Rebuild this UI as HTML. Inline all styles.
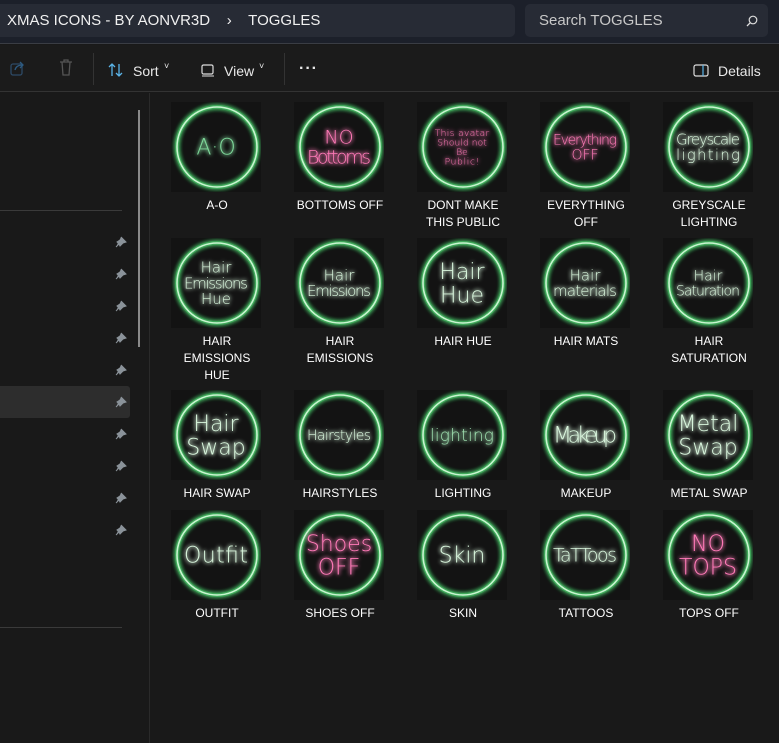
<!DOCTYPE html>
<html><head><meta charset="utf-8"><style>
*{margin:0;padding:0;box-sizing:border-box}
body{width:779px;height:743px;background:#191919;font-family:"Liberation Sans",sans-serif;color:#fff;position:relative;overflow:hidden}
.top{position:absolute;left:0;top:0;width:779px;height:44px;background:#1c202a;border-bottom:1px solid #3a3d44}
.addr{position:absolute;left:-6px;top:4px;width:521px;height:33px;background:#272b35;border-radius:5px;font-size:15px;line-height:33px;padding-left:13px;color:#f0f0f0}
.search{position:absolute;left:525px;top:4px;width:243px;height:33px;background:#272b35;border-radius:5px;font-size:15px;line-height:33px;padding-left:14px;color:#c8c8c8}
.tb{position:absolute;left:0;top:45px;width:779px;height:47px;background:#1b1b1b;border-bottom:1px solid #333;font-size:14px;color:#e8e8e8}
.tb span{position:absolute;top:18px}
.sep{position:absolute;top:8px;width:1px;height:32px;background:#333}
.lab{position:absolute;width:120px;text-align:center;font-size:12px;line-height:17px;color:#fff}
.ic{position:absolute;width:90px;height:90px;background:#131313}
</style></head><body>
<div class="top">
<div class="addr">XMAS ICONS - BY AONVR3D &nbsp;&nbsp;&nbsp;›&nbsp;&nbsp;&nbsp; TOGGLES</div>
<div class="search">Search TOGGLES<svg style="position:absolute;right:10px;top:11px" width="12" height="12"><circle cx="7" cy="5" r="3.8" fill="none" stroke="#ddd" stroke-width="1.2"/><path d="M4.3 7.7L1 11" stroke="#ddd" stroke-width="1.3"/></svg></div>
</div>
<div class="tb">
<svg style="position:absolute;left:10px;top:15px" width="16" height="16"><rect x="1" y="4" width="11" height="11" rx="2" fill="none" stroke="#2d4a66" stroke-width="1.3"/><path d="M5 10 Q6 5 13 5 M10 2 L13 5 L10 8" fill="none" stroke="#2d5a80" stroke-width="1.3"/></svg>
<svg style="position:absolute;left:59px;top:14px" width="14" height="18"><path d="M1 3H13M5 3V1H9V3M3 3L4 16H10L11 3" fill="none" stroke="#555" stroke-width="1.3"/></svg>
<div class="sep" style="left:93px"></div>
<svg style="position:absolute;left:108px;top:17px" width="16" height="16"><path d="M4 14V2M1 5L4 2L7 5M11 2V14M8 11L11 14L14 11" fill="none" stroke="#5ab4e8" stroke-width="1.3"/></svg>
<span style="left:133px">Sort</span><span style="left:164px;font-size:9px;top:16px">˅</span>
<svg style="position:absolute;left:201px;top:19px" width="14" height="13"><rect x="1" y="1" width="11" height="9" rx="1.5" fill="none" stroke="#ddd" stroke-width="1.2"/><path d="M1 12H13" stroke="#ddd"/></svg>
<span style="left:224px">View</span><span style="left:259px;font-size:9px;top:16px">˅</span>
<div class="sep" style="left:284px"></div>
<span style="left:299px;top:15px;font-weight:bold;font-size:16px;letter-spacing:1px">···</span>
<svg style="position:absolute;left:693px;top:19px" width="16" height="13"><rect x="1" y="1" width="14" height="11" rx="2" fill="none" stroke="#ddd" stroke-width="1.2"/><path d="M10 1V12" stroke="#5ab4e8" stroke-width="1.2"/></svg>
<span style="left:718px">Details</span>
</div>
<div style="position:absolute;left:0;top:210px;width:122px;height:1px;background:#3a3a3a"></div>
<div style="position:absolute;left:0;top:627px;width:122px;height:1px;background:#3a3a3a"></div>
<div style="position:absolute;left:0;top:386px;width:130px;height:32px;background:#2d2d2d;border-radius:0 3px 3px 0"></div>
<div style="position:absolute;left:138px;top:110px;width:2px;height:237px;background:#8a8a8a"></div>
<div style="position:absolute;left:149px;top:93px;width:1px;height:650px;background:#2a2a2a"></div>
<svg width="0" height="0" style="position:absolute"><defs><filter id="g" x="-30%" y="-30%" width="160%" height="160%"><feGaussianBlur stdDeviation="2.2" result="b"/><feMerge><feMergeNode in="b"/><feMergeNode in="b"/><feMergeNode in="SourceGraphic"/></feMerge></filter></defs></svg>
<div id="pins"></div>
<div id="grid"></div>
<script>
var p='';[242,274,306,338,370,402,434,466,498,530].forEach(function(y){p+='<svg style="position:absolute;left:115px;top:'+(y-6)+'px" width="12" height="12"><path d="M6 1L11 6L8 7L5 10L4 8L1 11M4 8L2 6L5 4Z" fill="#8a9299" stroke="#8a9299" stroke-width="1"/></svg>'});
document.getElementById('pins').innerHTML=p;
var items=[["A-O",["A·O"],"#7fd89a"],["BOTTOMS OFF",["NO","Bottoms"],"#ff7ab8"],["DONT MAKE<br>THIS PUBLIC",["This avatar","Should not","Be","Public!"],"#ff7ab8"],["EVERYTHING<br>OFF",["Everything","OFF"],"#ff7ab8"],["GREYSCALE<br>LIGHTING",["Greyscale","lighting"],"#d8f5dc"],
["HAIR<br>EMISSIONS<br>HUE",["Hair","Emissions","Hue"],"#d8f5dc"],["HAIR<br>EMISSIONS",["Hair","Emissions"],"#d8f5dc"],["HAIR HUE",["Hair","Hue"],"#d8f5dc"],["HAIR MATS",["Hair","materials"],"#d8f5dc"],["HAIR<br>SATURATION",["Hair","Saturation"],"#d8f5dc"],
["HAIR SWAP",["Hair","Swap"],"#d8f5dc"],["HAIRSTYLES",["Hairstyles"],"#d8f5dc"],["LIGHTING",["lighting"],"#9fe0b0"],["MAKEUP",["Makeup"],"#d8f5dc"],["METAL SWAP",["Metal","Swap"],"#d8f5dc"],
["OUTFIT",["Outfit"],"#d8f5dc"],["SHOES OFF",["Shoes","OFF"],"#ff7ab8"],["SKIN",["Skin"],"#d8f5dc"],["TATTOOS",["TaTToos"],"#d8f5dc"],["TOPS OFF",["NO","TOPS"],"#ff7ab8"]];
var tops=[102,238,390,510],h='';
items.forEach(function(it,i){var c=i%5,r=Math.floor(i/5),x=171+c*123,y=tops[r];
var n=it[1].length,maxl=Math.max.apply(null,it[1].map(function(s){return s.length}));
var fs=n>=4?9:Math.min(22,Math.floor(120/maxl)+2);if(n==3)fs=Math.min(fs,15);
var t='';it[1].forEach(function(s,k){var yy=45+(k-(n-1)/2)*fs*1.05+fs*0.35;t+='<text x="45" y="'+yy+'" text-anchor="middle" font-size="'+fs+'" font-family="DejaVu Sans" font-weight="300" fill="'+it[2]+'" filter="url(#g)" textLength="'+(s.length>5?Math.min(64,s.length*fs*0.55):'')+'">'+s+'</text>'});
t=t.replace(/ textLength=""/g,'');
h+='<div class="ic" style="left:'+x+'px;top:'+y+'px"><svg width="90" height="90"><circle cx="46" cy="45" r="40" fill="none" stroke="#3fa85a" stroke-width="4" filter="url(#g)"/><circle cx="46" cy="45" r="40" fill="none" stroke="#c8f5d0" stroke-width="1.6"/>'+t+'</svg></div>';
h+='<div class="lab" style="left:'+(x-14)+'px;top:'+(y+95)+'px">'+it[0]+'</div>';});
document.getElementById('grid').innerHTML=h;
</script>
</body></html>
